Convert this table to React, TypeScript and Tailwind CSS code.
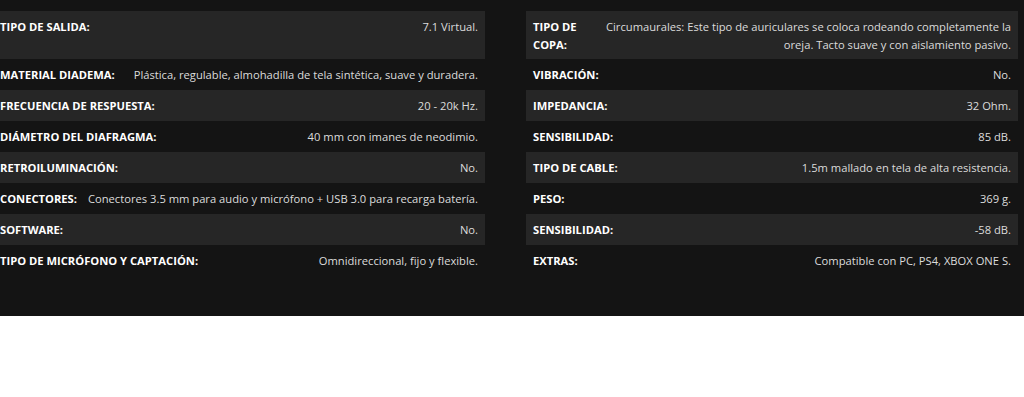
const left = [
  { label: "TIPO DE SALIDA:", value: "7.1 Virtual.", tall: true },
  { label: "MATERIAL DIADEMA:", value: "Plástica, regulable, almohadilla de tela sintética, suave y duradera." },
  { label: "FRECUENCIA DE RESPUESTA:", value: "20 - 20k Hz." },
  { label: "DIÁMETRO DEL DIAFRAGMA:", value: "40 mm con imanes de neodimio." },
  { label: "RETROILUMINACIÓN:", value: "No." },
  { label: "CONECTORES:", value: "Conectores 3.5 mm para audio y micrófono + USB 3.0 para recarga batería." },
  { label: "SOFTWARE:", value: "No." },
  { label: "TIPO DE MICRÓFONO Y CAPTACIÓN:", value: "Omnidireccional, fijo y flexible." },
]

const right = [
  {
    label: "TIPO DE COPA:",
    value:
      "Circumaurales: Este tipo de auriculares se coloca rodeando completamente la oreja. Tacto suave y con aislamiento pasivo.",
    tall: true,
  },
  { label: "VIBRACIÓN:", value: "No." },
  { label: "IMPEDANCIA:", value: "32 Ohm." },
  { label: "SENSIBILIDAD:", value: "85 dB." },
  { label: "TIPO DE CABLE:", value: "1.5m mallado en tela de alta resistencia." },
  { label: "PESO:", value: "369 g." },
  { label: "SENSIBILIDAD:", value: "-58 dB." },
  { label: "EXTRAS:", value: "Compatible con PC, PS4, XBOX ONE S." },
]

type Spec = { label: string; value: string; tall?: boolean }

function SpecRow({ spec, index }: { spec: Spec; index: number }) {
  const striped = index % 2 === 0
  const wrapLabel = spec.tall && spec.value.length > 40
  return (
    <div
      className={
        "flex items-start justify-between gap-[6px] px-[7px] pt-[6.5px] leading-[18px] " +
        (striped ? "bg-[#262626] " : "") +
        (spec.tall ? "h-[48px]" : "h-[31px]")
      }
    >
      <span
        className={
          "font-bold text-white uppercase " + (wrapLabel ? "w-[60px] shrink-0" : "shrink-0 whitespace-nowrap")
        }
      >
        {spec.label}
      </span>
      <span className={"text-right text-[#dcdcdc] " + (wrapLabel ? "" : "whitespace-nowrap")}>{spec.value}</span>
    </div>
  )
}

export default function App() {
  return (
    <div className="bg-white h-[397px] overflow-hidden">
      <section className="bg-[#141414] pt-[11px] pb-[40px] font-['Open_Sans',sans-serif] text-[11.2px]">
        <div className="flex gap-[41px] -ml-[7px] w-[1025px]">
          <div className="w-[492px]">
            {left.map((s, i) => (
              <SpecRow key={s.label + i} spec={s} index={i} />
            ))}
          </div>
          <div className="w-[492px]">
            {right.map((s, i) => (
              <SpecRow key={s.label + i} spec={s} index={i} />
            ))}
          </div>
        </div>
      </section>
    </div>
  )
}
